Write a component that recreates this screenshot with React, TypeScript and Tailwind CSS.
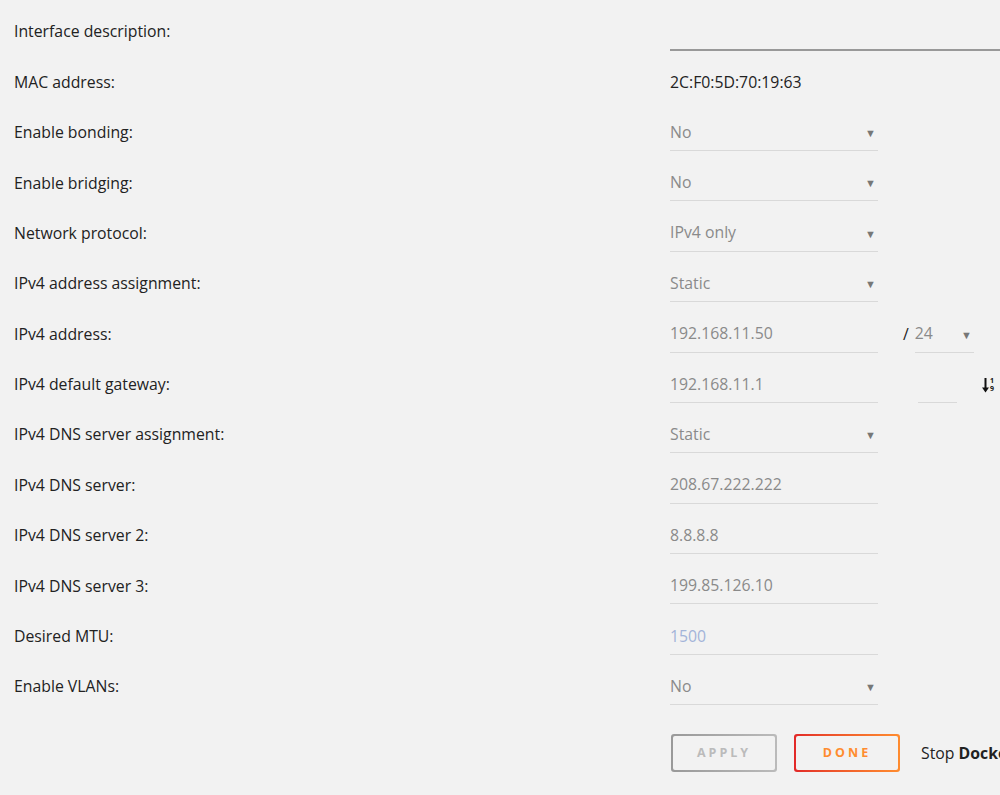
import React from "react";

const Arrow = () => <span className="text-[11px] text-[#777] leading-none">▼</span>;

function Select({ value, w = "w-[208px]" }: { value: string; w?: string }) {
  return (
    <div className={`${w} shrink-0 h-[36px] flex items-center justify-between border-b border-[#d9d9d9] text-[#8a8a8a] pr-[2px]`}>
      <span>{value}</span>
      <Arrow />
    </div>
  );
}

function Input({ value, color = "text-[#8a8a8a]" }: { value: string; color?: string }) {
  return (
    <div className={`w-[208px] shrink-0 h-[36px] flex items-center border-b border-[#d9d9d9] ${color}`}>
      <span>{value}</span>
    </div>
  );
}

function Row({ label, children }: { label: string; children?: React.ReactNode }) {
  return (
    <div className="flex h-[50.4px] items-center">
      <div className="w-[670px] shrink-0 pl-[14px] text-[#222]">{label}</div>
      <div className="flex items-center">{children}</div>
    </div>
  );
}

function SortIcon() {
  return (
    <div className="flex items-center h-[17px] gap-[1px]">
      <svg width="7" height="16" viewBox="0 0 7 16">
        <line x1="3.5" y1="1" x2="3.5" y2="12" stroke="#111" strokeWidth="2" />
        <polygon points="0,10.5 7,10.5 3.5,15.5" fill="#111" />
      </svg>
      <div className="flex flex-col items-center text-[7px] font-bold leading-[8px] text-[#111] mt-[1px]">
        <span>1</span>
        <span>9</span>
      </div>
    </div>
  );
}

export default function App() {
  return (
    <div
      className="w-[1000px] h-[795px] overflow-hidden bg-[#f2f2f2] text-[15.8px]"
      style={{ fontFamily: '"Open Sans", "Noto Sans", sans-serif' }}
    >
      <div className="pt-[7px]">
        <Row label="Interface description:">
          <div className="w-[340px] shrink-0 h-[38px] border-b-2 border-[#999]" />
        </Row>
        <Row label="MAC address:">
          <span className="text-[#222] whitespace-nowrap">2C:F0:5D:70:19:63</span>
        </Row>
        <Row label="Enable bonding:">
          <Select value="No" />
        </Row>
        <Row label="Enable bridging:">
          <Select value="No" />
        </Row>
        <Row label="Network protocol:">
          <Select value="IPv4 only" />
        </Row>
        <Row label="IPv4 address assignment:">
          <Select value="Static" />
        </Row>
        <Row label="IPv4 address:">
          <Input value="192.168.11.50" />
          <span className="ml-[25px] mr-[6px] text-[#222]">/</span>
          <Select value="24" w="w-[59px]" />
        </Row>
        <Row label="IPv4 default gateway:">
          <Input value="192.168.11.1" />
          <div className="ml-[40px] w-[39px] shrink-0 h-[36px] border-b border-[#d9d9d9]" />
          <div className="ml-[25px] shrink-0">
            <SortIcon />
          </div>
        </Row>
        <Row label="IPv4 DNS server assignment:">
          <Select value="Static" />
        </Row>
        <Row label="IPv4 DNS server:">
          <Input value="208.67.222.222" />
        </Row>
        <Row label="IPv4 DNS server 2:">
          <Input value="8.8.8.8" />
        </Row>
        <Row label="IPv4 DNS server 3:">
          <Input value="199.85.126.10" />
        </Row>
        <Row label="Desired MTU:">
          <Input value="1500" color="text-[#a3b4d9]" />
        </Row>
        <Row label="Enable VLANs:">
          <Select value="No" />
        </Row>
      </div>
      <div className="flex items-center pl-[671px] mt-[22px]">
        <div className="w-[106px] shrink-0 h-[38px] rounded-[3px] p-[2px] bg-gradient-to-r from-[#999] to-[#bbb]">
          <div className="w-full h-full rounded-[2px] bg-[#f2f2f2] flex items-center justify-center text-[12.5px] font-bold tracking-[3px] text-[#bbb]">
            APPLY
          </div>
        </div>
        <div className="ml-[17px] w-[106px] shrink-0 h-[38px] rounded-[3px] p-[2px] bg-gradient-to-r from-[#e22828] to-[#ff8c2f]">
          <div className="w-full h-full rounded-[2px] bg-[#f2f2f2] flex items-center justify-center text-[12.5px] font-bold tracking-[3px] text-[#ff8c2f]">
            DONE
          </div>
        </div>
        <div className="ml-[21px] whitespace-nowrap text-[#222]">
          Stop <b>Docker</b>
        </div>
      </div>
    </div>
  );
}
